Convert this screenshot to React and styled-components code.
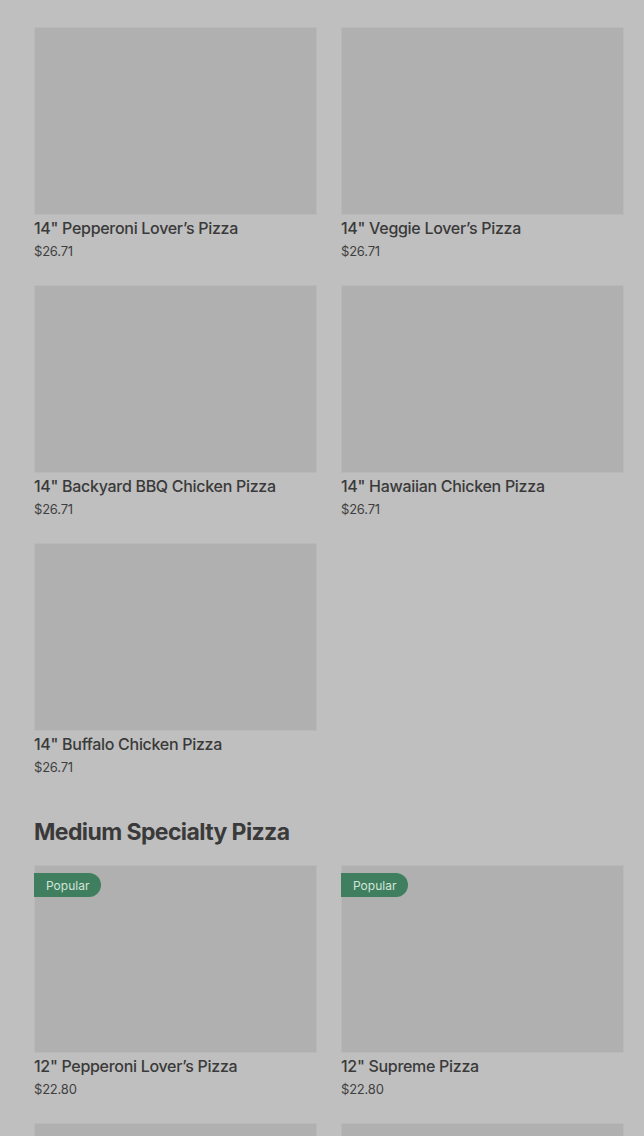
import React from "react";
import styled, { createGlobalStyle } from "styled-components";

const Global = createGlobalStyle`
  html, body { margin: 0; padding: 0; background: #bfbfbf; }
  body { font-family: Inter, "Noto Sans", sans-serif; color: #3a3a3a; }
  * { box-sizing: border-box; }
`;

const Page = styled.div`
  padding: 27px 20px 0 34px;
  height: 1136px;
  overflow: hidden;
`;

const Section = styled.section`
  display: flex;
  flex-direction: column;
  margin-bottom: ${(p) => p.$mb || 0}px;
`;

const Heading = styled.h2`
  margin: 0 0 17px;
  font-size: 23px;
  line-height: 32px;
  font-weight: 700;
  letter-spacing: -0.6px;
  color: #3a3a3a;
`;

const Grid = styled.div`
  display: grid;
  grid-template-columns: 283px 283px;
  column-gap: 24px;
  row-gap: 25px;
`;

const Card = styled.div`
  display: flex;
  flex-direction: column;
`;

const Thumb = styled.div`
  position: relative;
  height: 188px;
  background: #b0b0b0;
  border: 1px solid #b9b9b9;
`;

const Badge = styled.span`
  position: absolute;
  top: 7px;
  left: -1px;
  height: 24px;
  padding: 0 12px;
  display: flex;
  align-items: center;
  background: #3f7f5f;
  color: #d4e4da;
  font-size: 12px;
  border-radius: 0 12px 12px 0;
`;

const Title = styled.div`
  margin-top: 3px;
  font-size: 16px;
  line-height: 20px;
  font-weight: 500;
  letter-spacing: -0.3px;
  color: #3a3a3a;
`;

const Price = styled.div`
  margin-top: 4px;
  font-size: 13px;
  line-height: 18px;
  letter-spacing: -0.2px;
  color: #3f3f3f;
`;

const large = [
  { name: '14" Pepperoni Lover\u2019s Pizza', price: "$26.71" },
  { name: '14" Veggie Lover\u2019s Pizza', price: "$26.71" },
  { name: '14" Backyard BBQ Chicken Pizza', price: "$26.71" },
  { name: '14" Hawaiian Chicken Pizza', price: "$26.71" },
  { name: '14" Buffalo Chicken Pizza', price: "$26.71" },
];

const medium = [
  { id: "m1", name: '12" Pepperoni Lover\u2019s Pizza', price: "$22.80", popular: true },
  { id: "m2", name: '12" Supreme Pizza', price: "$22.80", popular: true },
  { id: "m3" },
  { id: "m4" },
];

function Item({ item }) {
  return (
    <Card>
      <Thumb>{item.popular && <Badge>Popular</Badge>}</Thumb>
      {item.name && <Title>{item.name}</Title>}
      {item.price && <Price>{item.price}</Price>}
    </Card>
  );
}

export default function App() {
  return (
    <>
      <Global />
      <Page>
        <Section $mb={40}>
          <Grid>
            {large.map((it) => (
              <Item key={it.name} item={it} />
            ))}
          </Grid>
        </Section>
        <Section>
          <Heading>Medium Specialty Pizza</Heading>
          <Grid>
            {medium.map((it) => (
              <Item key={it.id} item={it} />
            ))}
          </Grid>
        </Section>
      </Page>
    </>
  );
}
